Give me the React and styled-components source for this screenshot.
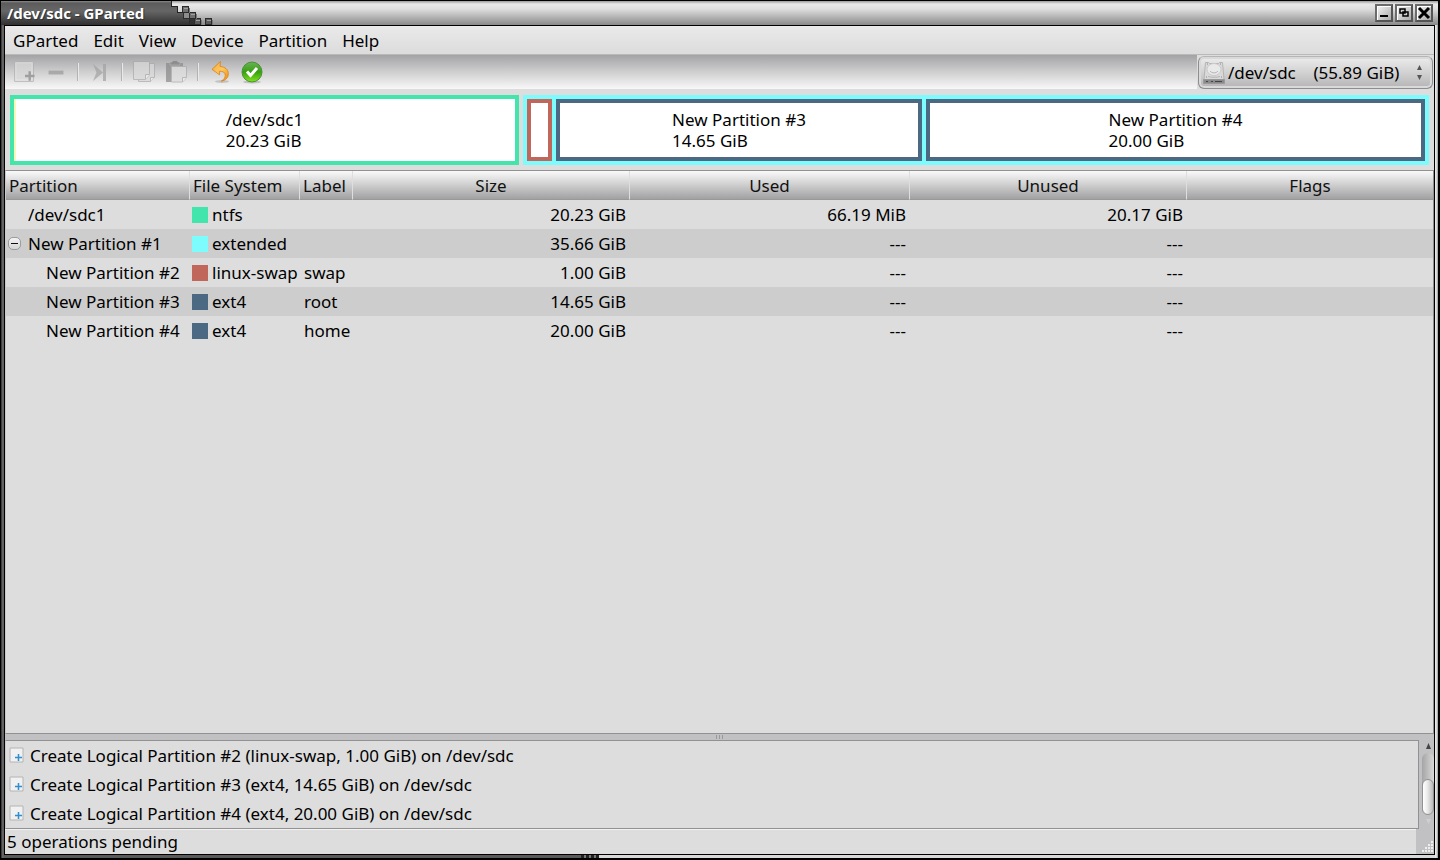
import React from 'react';
import styled, { createGlobalStyle } from 'styled-components';

const colors = {
  ntfs: '#42e5ac',
  extended: '#7dfcfe',
  swap: '#c1665a',
  ext4: '#4b6983',
  used: '#f8f8ba',
  base: '#dddddd',
  stripe: '#cdcdcd',
  chrome: '#c1c1c3',
  line: '#919191',
};

const GlobalStyle = createGlobalStyle`
  * { box-sizing: border-box; }
  body {
    margin: 0;
    background: #000;
    color: #000;
    font: 17px/21px "Noto Sans", "Open Sans", sans-serif;
  }
  button, select {
    margin: 0;
    padding: 0;
    border: 0;
    background: none;
    color: inherit;
    font: inherit;
  }
`;

const Window = styled.div`
  display: flex;
  flex-direction: column;
  height: 100vh;
  padding: 1px 2px 2px 1px;
  background: #000;
`;

const TitleBar = styled.header`
  display: flex;
  flex: none;
  height: 24px;
  background: linear-gradient(#9a9a9a, #e8e8e8 3px, #dedede 8px, #8a8a8a);
`;

const Title = styled.h1`
  margin: 0;
  padding: 0 26px 0 6px;
  background: linear-gradient(#8a8a8a, #5c5c5c 2px, #666 10px, #303030);
  color: #fff;
  font-size: 15px;
  line-height: 24px;
  text-shadow: 1px 1px 0 #333;
`;

const WindowButtons = styled.div`
  display: flex;
  gap: 2px;
  margin-left: auto;
  padding: 3px 5px 0 0;
`;

const WindowButton = styled.button`
  display: flex;
  width: 18px;
  height: 18px;
  border: 2px solid;
  border-color: #6b6b6b #555 #555 #6b6b6b;
  background: linear-gradient(135deg, #f4f4f4, #a9a9a9);
  box-shadow: inset 1px 1px 0 #fff;
`;

const Frame = styled.div`
  display: flex;
  flex: 1;
  min-height: 0;
  padding: 0 3px 3px;
  background:
    linear-gradient(90deg, #2b2b2b, #777 2px, #4a4a4a 3px) left / 3px 100% no-repeat,
    linear-gradient(90deg, #f0f0f0, #cfcfcf 2px, #8c8c8c 3px) right / 3px 100% no-repeat,
    repeating-linear-gradient(90deg, #222 0 3px, #777 3px 5px) 580px 100% / 18px 3px no-repeat,
    linear-gradient(90deg, #5a5a5a 580px, #d8dada 598px);
`;

const Content = styled.main`
  display: flex;
  flex: 1;
  flex-direction: column;
  min-width: 0;
  border: 1px solid #000;
  background: ${colors.base};
`;

const MenuBar = styled.nav`
  display: flex;
  flex: none;
  gap: 1px;
  height: 29px;
  padding-left: 1px;
  border-bottom: 1px solid #b9b9b9;
  background: linear-gradient(#eaeaea, #dcdcdc);
`;

const MenuItem = styled.button`
  padding: 0 7px;
`;

const ToolRow = styled.div`
  display: flex;
  flex: none;
  height: 34px;
`;

const ToolBar = styled.div`
  display: flex;
  flex: 1;
  padding-left: 3px;
  background: linear-gradient(#a3a3a6, #cfcfd0 50%, #f8f8f8);
`;

const ToolButton = styled.button`
  display: flex;
  align-items: center;
  justify-content: center;
  width: 32px;

  &:disabled { opacity: 0.7; }
`;

const ToolSeparator = styled.span`
  width: 2px;
  margin: 8px 5px;
  border-left: 1px solid #b3b3b3;
  border-right: 1px solid #e9e9e9;
`;

const DevicePicker = styled.label`
  display: flex;
  align-items: center;
  gap: 3px;
  width: 235px;
  height: 33px;
  margin: 1px 1px 0;
  padding: 0 9px 0 4px;
  border: 1px solid #8d8d8d;
  border-top-color: #b5b5b5;
  border-radius: 6px;
  background: linear-gradient(#ececec, #d2d2d2 50%, #b4b4b4);
  box-shadow: inset 0 0 0 2px #d9d9d9;
`;

const DeviceSelect = styled.select`
  flex: 1;
  min-width: 0;
  height: 29px;
  appearance: none;
  outline: none;
`;

const DiskMap = styled.section`
  display: grid;
  flex: none;
  grid-template-columns: 509fr 906fr;
  gap: 4px;
  height: 81px;
  padding: 6px 5px 5px;
`;

const ExtendedMap = styled.div`
  display: grid;
  grid-template-columns: 25fr 366fr 499fr;
  gap: 4px;
  min-width: 0;
  padding: 4px;
  background: ${colors.extended};
`;

const Block = styled.div`
  display: flex;
  align-items: center;
  justify-content: center;
  min-width: 0;
  border: 4px solid ${props => props.$color};
  background: ${props => props.$used
    ? `linear-gradient(90deg, ${colors.used} 2px, #fff 2px)`
    : '#fff'};
  white-space: nowrap;
`;

const PartitionPane = styled.section`
  flex: 1;
  min-height: 0;
  border: 1px solid ${colors.line};
  border-left-color: #c9c9c9;
`;

const Table = styled.table`
  width: 100%;
  border-spacing: 0;
  table-layout: fixed;
`;

const HeaderCell = styled.th`
  width: ${props => props.$width};
  height: 29px;
  padding: 0 3px;
  border-right: 1px solid #dedede;
  border-bottom: 1px solid #999;
  background: linear-gradient(#fafafa, #cecece 50%, #a1a1a3);
  color: #111;
  font-weight: normal;
  text-align: ${props => props.$align || 'center'};
  white-space: nowrap;

  &:last-child { border-right: 0; }
`;

const Row = styled.tr`
  background: ${colors.base};

  &:nth-child(even) { background: ${colors.stripe}; }
`;

const Cell = styled.td`
  height: 29px;
  padding: 0 4px;
  text-align: ${props => props.$align || 'left'};
  white-space: nowrap;
`;

const NameCell = styled(Cell)`
  padding: 0 0 0 ${props => [22, 2, 40][props.$level]}px;
`;

const FsCell = styled(Cell)`
  padding: 0 0 0 2px;
`;

const CellInner = styled.div`
  display: flex;
  align-items: center;
  gap: ${props => props.$gap || 4}px;
`;

const Swatch = styled.span`
  width: 16px;
  height: 16px;
  background: ${props => props.$color};
`;

const Expander = styled.button`
  display: flex;
  align-items: center;
  justify-content: center;
  width: 13px;
  height: 13px;
  border: 1px solid #9c9c9c;
  border-radius: 5px;
  background: linear-gradient(#f4f4f4, #d6d6d6);

  &::before {
    content: '';
    width: 7px;
    height: 1px;
    background: #111;
  }
`;

const Splitter = styled.div`
  display: flex;
  flex: none;
  align-items: center;
  justify-content: center;
  gap: 2px;
  height: 6px;
  background: ${colors.chrome};
`;

const SplitterDot = styled.span`
  width: 1px;
  height: 4px;
  background: #999;
`;

const OperationsPane = styled.section`
  display: flex;
  flex: none;
  background: ${colors.chrome};
`;

const Operations = styled.ul`
  flex: 1;
  margin: 0;
  padding: 0;
  border: 1px solid ${colors.line};
  border-left-color: #c9c9c9;
  background: ${colors.base};
  list-style: none;
`;

const Operation = styled.li`
  display: flex;
  align-items: center;
  gap: 6px;
  height: 29px;
  padding-left: 3px;
`;

const ScrollBar = styled.div`
  display: flex;
  flex-direction: column;
  align-items: center;
  width: 15px;
  padding: 3px 0 4px 3px;
`;

const ScrollTrack = styled.div`
  display: flex;
  flex: 1;
  align-items: flex-end;
  width: 12px;
  margin: 4px 0;
  border-radius: 6px;
  background: linear-gradient(90deg, #a5a5a7, #d8d8d8);
`;

const ScrollThumb = styled.div`
  width: 12px;
  height: 36px;
  border: 1px solid #929292;
  border-radius: 6px;
  background: linear-gradient(90deg, #fff, #ededed 40%, #bababa);
`;

const StatusBar = styled.footer`
  display: flex;
  flex: none;
  align-items: flex-end;
  justify-content: space-between;
  height: 25px;
  background: ${colors.chrome};
`;

const Status = styled.span`
  flex: 1;
  height: 25px;
  padding-left: 2px;
  border-top: 1px solid #f2f2f2;
  background: ${colors.base};
  line-height: 23px;
`;

function TitleSteps() {
  return <svg width="46" height="24" shapeRendering="crispEdges">
    <defs>
      <linearGradient id="steps" x1="0" y1="0" x2="0" y2="24" gradientUnits="userSpaceOnUse">
        <stop offset="0" stopColor="#8a8a8a" />
        <stop offset=".08" stopColor="#5c5c5c" />
        <stop offset=".42" stopColor="#666" />
        <stop offset="1" stopColor="#303030" />
      </linearGradient>
    </defs>
    <path d="M0 0h2v5h6v6h6v6h6v7H0z" fill="url(#steps)" />
    <path d="M1.500 0v5.500h6v6h6v6h6v7" fill="none" stroke="#222" />
    <g fill="#707070" stroke="#2c2c2c">
      <rect x="13.500" y="11.500" width="6" height="6" fill="#8d8d8d" />
      <rect x="12.500" y="5.500" width="6" height="6" />
      <rect x="19.500" y="11.500" width="6" height="6" />
      <rect x="19.500" y="17.500" width="5" height="6" fill="#333" />
      <rect x="24.500" y="17.500" width="6" height="6" fill="#5c5c5c" />
      <rect x="35.500" y="17.500" width="6" height="6" fill="#5c5c5c" />
    </g>
    <path d="M14 7h4M21 13h4M26 19h4M37 19h4" stroke="#a0a0a0" />
    <path d="M19.500 7v5M26.500 13v5M31.500 19v5M42.500 19v5" stroke="#777" />
  </svg>;
}

function NewIcon() {
  return <svg width="22" height="24" viewBox="0 0 22 24">
    <path d="M1.500 1.500h19v20h-19z" fill="#d9d9d9" stroke="#b0b0b0" />
    <path d="M3 3h16v17H3z" fill="none" stroke="#e6e6e6" />
    <path d="M12 14.800h3.500v-3.600h2.400v3.600h3.600v2.400h-3.600v3.600h-2.400v-3.600H12z" fill="#888" />
  </svg>;
}

function RemoveIcon() {
  return <svg width="22" height="24">
    <rect x="3.500" y="10.500" width="15" height="4" rx="1" fill="#999" stroke="#b9b9b9" />
  </svg>;
}

function LastIcon() {
  return <svg width="22" height="24">
    <path d="M4 4l10 8.500L4 21l3.500-8.500z" fill="#a2a2a2" />
    <path d="M14 4h3v17h-3z" fill="#a2a2a2" />
  </svg>;
}

function CopyIcon() {
  return <svg width="24" height="24" fill="#dadada" stroke="#aaa">
    <path d="M6.500 3.500h16v14l-4 4h-12z" />
    <path d="M1.500 1.500h16v13l-4 5h-12z" />
    <path d="M17.500 14.500h-4v5M22.500 17.500h-4v4" fill="#eee" />
  </svg>;
}

function PasteIcon() {
  return <svg width="24" height="24">
    <path d="M2 3h17v19H2z" fill="#888" />
    <path d="M6 5V2h2l1-1.500h4L14 2h2v3z" fill="#7c7c7c" stroke="#bbb" strokeWidth=".6" />
    <path d="M7.500 6.500h15v11l-4 4.500h-11z" fill="#dedede" stroke="#aaa" />
    <path d="M22.500 17.500h-4V22" fill="#eee" stroke="#aaa" />
  </svg>;
}

function UndoIcon() {
  return <svg width="24" height="24">
    <defs>
      <linearGradient id="undo" x1="0" y1="0" x2="1" y2="1">
        <stop offset="0" stopColor="#f9a83a" />
        <stop offset=".5" stopColor="#fdc960" />
        <stop offset="1" stopColor="#ee8c0e" />
      </linearGradient>
    </defs>
    <ellipse cx="14" cy="21.500" rx="7" ry="1.500" fill="#aaa" opacity=".6" />
    <path
      d="M12.500 1.500L4 9.300l7.500 5.500-.2-3.600c3.600-.2 6 1.300 6 4.200 0 2.200-1.300 3.900-4 5.800 4.500-.8 7-3.600 7-7.500 0-4.300-3.300-6.900-8.300-7.200z"
      fill="url(#undo)"
      stroke="#d9800e"
      strokeWidth=".8"
      strokeLinejoin="round"
    />
  </svg>;
}

function ApplyIcon() {
  return <svg width="24" height="24">
    <defs>
      <linearGradient id="apply" x1="0" y1="0" x2="0" y2="1">
        <stop offset="0" stopColor="#6ab356" />
        <stop offset=".5" stopColor="#36a010" />
        <stop offset="1" stopColor="#7fe51c" />
      </linearGradient>
    </defs>
    <ellipse cx="12" cy="22" rx="9" ry="1.500" fill="#999" opacity=".5" />
    <circle cx="12" cy="12" r="10" fill="url(#apply)" stroke="#4c8f38" />
    <path d="M7 11.500l3.500 4 6.500-7.500" fill="none" stroke="#fff" strokeWidth="3" />
  </svg>;
}

function DiskIcon() {
  return <svg width="22" height="24">
    <path d="M2.500 1.500h3l1 1h9l1-1h3l1.500 17H1z" fill="#d9d9d9" stroke="#b4b4b4" />
    <path d="M.5 18.500h21v4H.5z" fill="#8a8a8a" stroke="#999" />
    <path d="M3 20.500h2M8 20.500h2M12 20.500h7" stroke="#444" />
    <ellipse cx="11" cy="8.500" rx="7" ry="6" fill="#e9e9e9" stroke="#cacaca" />
    <path d="M7 10c2 2.500 6 2.500 8 0M5 15.500c3 1 9 1 12 0" fill="none" stroke="#b4b4b4" />
    <path d="M4 3h1M17 3h1M3 16h1M18 16h1" stroke="#888" />
  </svg>;
}

function PickerArrows() {
  return <svg width="7" height="17" fill="#555">
    <path d="M3.500 1L6 6H1zM3.500 16L6 11H1z" />
  </svg>;
}

function CreateIcon() {
  return <svg width="15" height="17">
    <path d="M1 1h13v14H1z" fill="#f1f1f1" stroke="#b4b4b4" />
    <path d="M6 10.500h7M9.500 7v7" stroke="#2f8fd0" strokeWidth="1.500" />
  </svg>;
}

function ScrollArrow({ down }) {
  return <svg width="7" height="6" fill={down ? '#cfcfcf' : '#444'}>
    <path d={down ? 'M1 0h5L3.500 5z' : 'M3.500 0L6 6H1z'} />
  </svg>;
}

function ResizeGrip() {
  return <svg width="18" height="14" shapeRendering="crispEdges" fill="#eee">
    {[0, 1, 2, 3].map(row => Array.from({ length: row + 1 }, (_, i) =>
      <rect key={`${row}-${i}`} x={15 - i * 3} y={1 + row * 3} width="2" height="2" />
    ))}
  </svg>;
}

const menus = ['GParted', 'Edit', 'View', 'Device', 'Partition', 'Help'];

const partitions = [
  { name: '/dev/sdc1', level: 0, fs: 'ntfs', color: colors.ntfs, size: '20.23 GiB', used: '66.19 MiB', unused: '20.17 GiB' },
  { name: 'New Partition #1', level: 1, fs: 'extended', color: colors.extended, size: '35.66 GiB', used: '---', unused: '---' },
  { name: 'New Partition #2', level: 2, fs: 'linux-swap', color: colors.swap, label: 'swap', size: '1.00 GiB', used: '---', unused: '---' },
  { name: 'New Partition #3', level: 2, fs: 'ext4', color: colors.ext4, label: 'root', size: '14.65 GiB', used: '---', unused: '---' },
  { name: 'New Partition #4', level: 2, fs: 'ext4', color: colors.ext4, label: 'home', size: '20.00 GiB', used: '---', unused: '---' },
];

const operations = [
  'Create Logical Partition #2 (linux-swap, 1.00 GiB) on /dev/sdc',
  'Create Logical Partition #3 (ext4, 14.65 GiB) on /dev/sdc',
  'Create Logical Partition #4 (ext4, 20.00 GiB) on /dev/sdc',
];

export default function App() {
  return <Window>
    <GlobalStyle />
    <TitleBar>
      <Title>/dev/sdc - GParted</Title>
      <TitleSteps />
      <WindowButtons>
        <WindowButton aria-label="Minimize">
          <svg width="14" height="14"><path d="M3 9h8v2H3z" /></svg>
        </WindowButton>
        <WindowButton aria-label="Restore">
          <svg width="14" height="14" fill="#ccc" stroke="#000" strokeWidth="1.500">
            <path d="M3 3h5v4H3zM6 6h5v4H6z" />
          </svg>
        </WindowButton>
        <WindowButton aria-label="Close">
          <svg width="14" height="14" stroke="#000" strokeWidth="3">
            <path d="M2 2l10 10M12 2L2 12" />
          </svg>
        </WindowButton>
      </WindowButtons>
    </TitleBar>
    <Frame>
      <Content>
        <MenuBar>
          {menus.map(menu => <MenuItem key={menu}>{menu}</MenuItem>)}
        </MenuBar>
        <ToolRow>
          <ToolBar>
            <ToolButton aria-label="New" disabled><NewIcon /></ToolButton>
            <ToolButton aria-label="Delete" disabled><RemoveIcon /></ToolButton>
            <ToolSeparator />
            <ToolButton aria-label="Resize/Move" disabled><LastIcon /></ToolButton>
            <ToolSeparator />
            <ToolButton aria-label="Copy" disabled><CopyIcon /></ToolButton>
            <ToolButton aria-label="Paste" disabled><PasteIcon /></ToolButton>
            <ToolSeparator />
            <ToolButton aria-label="Undo"><UndoIcon /></ToolButton>
            <ToolButton aria-label="Apply"><ApplyIcon /></ToolButton>
          </ToolBar>
          <DevicePicker>
            <DiskIcon />
            <DeviceSelect aria-label="Device">
              <option>/dev/sdc{'\u00a0'.repeat(4)}(55.89 GiB)</option>
            </DeviceSelect>
            <PickerArrows />
          </DevicePicker>
        </ToolRow>
        <DiskMap>
          <Block $color={colors.ntfs} $used>
            <div>/dev/sdc1<br />20.23 GiB</div>
          </Block>
          <ExtendedMap>
            <Block $color={colors.swap} />
            <Block $color={colors.ext4}>
              <div>New Partition #3<br />14.65 GiB</div>
            </Block>
            <Block $color={colors.ext4}>
              <div>New Partition #4<br />20.00 GiB</div>
            </Block>
          </ExtendedMap>
        </DiskMap>
        <PartitionPane>
          <Table>
            <thead>
              <tr>
                <HeaderCell $width="184px" $align="left">Partition</HeaderCell>
                <HeaderCell $width="110px" $align="left">File System</HeaderCell>
                <HeaderCell $width="53px" $align="left">Label</HeaderCell>
                <HeaderCell $width="277px">Size</HeaderCell>
                <HeaderCell $width="280px">Used</HeaderCell>
                <HeaderCell $width="277px">Unused</HeaderCell>
                <HeaderCell>Flags</HeaderCell>
              </tr>
            </thead>
            <tbody>
              {partitions.map(p => <Row key={p.name}>
                <NameCell $level={p.level}>
                  <CellInner $gap={7}>
                    {p.level === 1 && <Expander aria-label="Collapse" />}
                    {p.name}
                  </CellInner>
                </NameCell>
                <FsCell>
                  <CellInner><Swatch $color={p.color} />{p.fs}</CellInner>
                </FsCell>
                <Cell>{p.label}</Cell>
                <Cell $align="right">{p.size}</Cell>
                <Cell $align="right">{p.used}</Cell>
                <Cell $align="right">{p.unused}</Cell>
                <Cell />
              </Row>)}
            </tbody>
          </Table>
        </PartitionPane>
        <Splitter><SplitterDot /><SplitterDot /><SplitterDot /></Splitter>
        <OperationsPane>
          <Operations>
            {operations.map(text => <Operation key={text}><CreateIcon />{text}</Operation>)}
          </Operations>
          <ScrollBar>
            <ScrollArrow />
            <ScrollTrack><ScrollThumb /></ScrollTrack>
            <ScrollArrow down />
          </ScrollBar>
        </OperationsPane>
        <StatusBar>
          <Status>5 operations pending</Status>
          <ResizeGrip />
        </StatusBar>
      </Content>
    </Frame>
  </Window>;
}
